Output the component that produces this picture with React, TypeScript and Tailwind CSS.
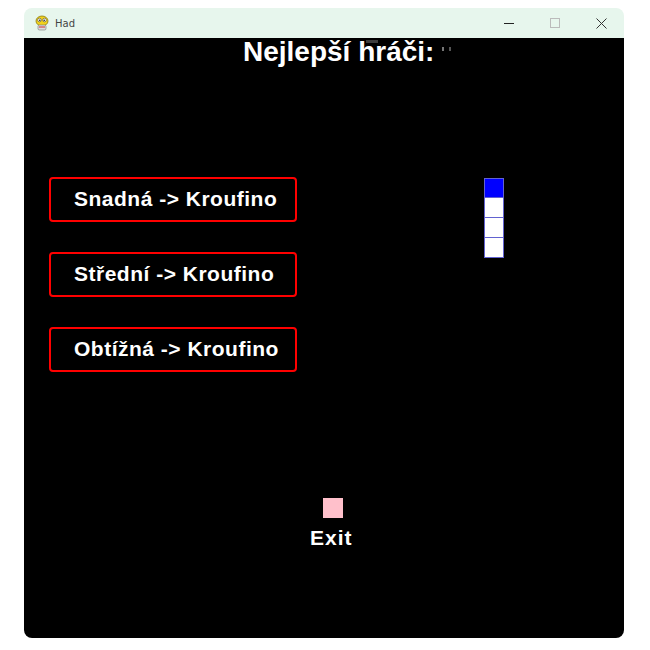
import React from "react";

const font = { fontFamily: '"Liberation Sans", Arial, sans-serif' };

function LevelButton({ label }: { label: string }) {
  return (
    <div className="flex h-[45px] w-[248px] items-center rounded-[4px] border-2 border-[#ff0000] pb-[3px] pl-[23px]">
      <span className="text-[21px] font-bold leading-none tracking-[0.5px] text-white">{label}</span>
    </div>
  );
}

function SnakeIcon() {
  return (
    <svg width="16" height="16" viewBox="0 0 16 16">
      <ellipse cx="8" cy="6" rx="6" ry="5" fill="#f2d21b" stroke="#8a7a10" strokeWidth="0.8" />
      <circle cx="5.5" cy="5" r="1.8" fill="#fff" stroke="#333" strokeWidth="0.5" />
      <circle cx="10.5" cy="5" r="1.8" fill="#fff" stroke="#333" strokeWidth="0.5" />
      <circle cx="5.8" cy="5.2" r="0.7" fill="#000" />
      <circle cx="10.2" cy="5.2" r="0.7" fill="#000" />
      <rect x="4" y="10" width="8" height="5" rx="1.5" fill="#ddd" stroke="#777" strokeWidth="0.6" />
      <path d="M5 12h6" stroke="#c33" strokeWidth="1" />
    </svg>
  );
}

export default function App() {
  return (
    <div className="h-[650px] w-[650px] bg-white pl-[24px] pt-[8px]" style={font}>
      <div className="flex h-[630px] w-[600px] flex-col overflow-hidden rounded-[8px]">
        {/* title bar */}
        <div className="flex h-[30px] items-center bg-[#e7f6ed] pl-[10px]">
          <SnakeIcon />
          <span
            className="ml-[5px] text-[10px] text-[#444]"
            style={{ fontFamily: '"DejaVu Sans", sans-serif' }}
          >
            Had
          </span>
          <div className="ml-auto flex h-full items-center">
            <div className="flex h-full w-[46px] items-center justify-center">
              <div className="h-px w-[10px] bg-[#222]" />
            </div>
            <div className="flex h-full w-[46px] items-center justify-center">
              <div className="h-[10px] w-[10px] border border-[#bbb]" />
            </div>
            <div className="flex h-full w-[46px] items-center justify-center">
              <svg width="11" height="11" viewBox="0 0 11 11">
                <path d="M0.5 0.5l10 10M10.5 0.5l-10 10" stroke="#333" strokeWidth="1" />
              </svg>
            </div>
          </div>
        </div>

        {/* game area */}
        <div className="flex h-[600px] flex-col bg-black">
          <div className="relative ml-[219px] text-[28px] font-bold leading-[28px] text-white">
            Nejlepší hráči:
            <span className="absolute left-[123px] top-[2px] h-[3px] w-[12px] bg-[#666] opacity-60" />
            <span className="absolute left-[199px] top-[9px] h-[4px] w-[2px] bg-[#777]" />
            <span className="absolute left-[206px] top-[9px] h-[4px] w-[2px] bg-[#555]" />
          </div>

          <div className="mt-[111px] flex pl-[25px]">
            <div className="flex flex-col gap-[30px]">
              <LevelButton label="Snadná -> Kroufino" />
              <LevelButton label="Střední -> Kroufino" />
              <LevelButton label="Obtížná -> Kroufino" />
            </div>
            <div className="ml-[187px] mt-px flex flex-col">
              <div className="h-[20px] w-[20px] border border-[#6262d0] bg-[#0000ff]" />
              <div className="h-[20px] w-[20px] border border-[#6262d0] border-t-0 bg-white" />
              <div className="h-[20px] w-[20px] border border-[#6262d0] border-t-0 bg-white" />
              <div className="h-[20px] w-[20px] border border-[#6262d0] border-t-0 bg-white" />
            </div>
          </div>

          <div className="mt-[126px] flex flex-col items-start pl-[286px]">
            <div className="ml-[13px] h-[20px] w-[20px] bg-[#ffc0cb]" />
            <span className="mt-[9px] text-[21px] font-bold leading-[21px] tracking-[1px] text-white">
              Exit
            </span>
          </div>
        </div>
      </div>
    </div>
  );
}
